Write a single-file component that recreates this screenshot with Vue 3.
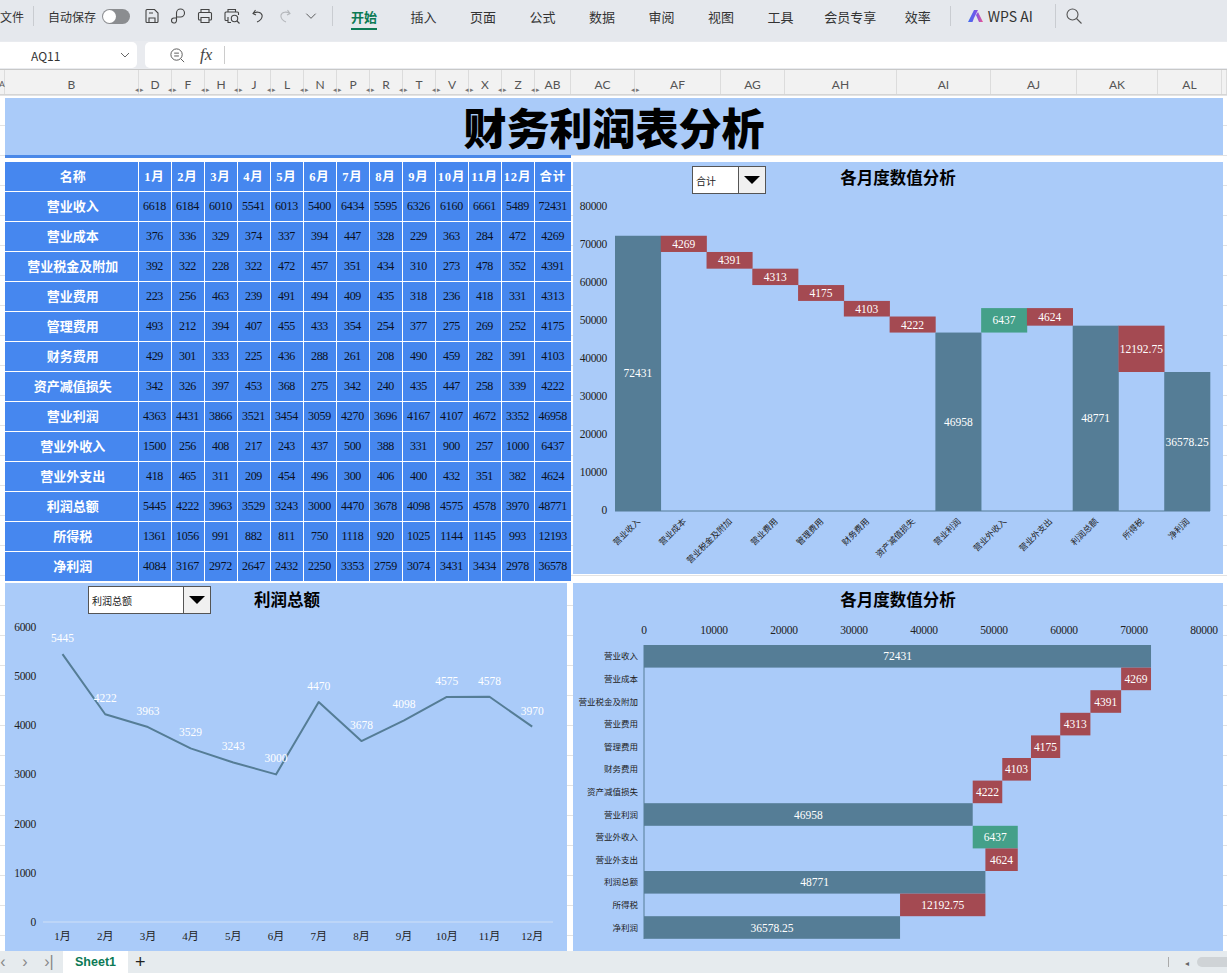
<template>
  <div class="app">
    <!-- top ribbon -->
    <header class="ribbon">
      <span class="file">文件</span>
      <i class="sep"></i>
      <span class="autosave">自动保存</span>
      <span class="toggle"><b></b></span>
      <div class="quick">
        <svg viewBox="0 0 18 18"><path d="M4 2.5h7.500L15 6v8.500a1 1 0 0 1-1 1H4a1 1 0 0 1-1-1v-11a1 1 0 0 1 1-1zM6 15.500V11h6v4.500M6 6h4" /></svg>
        <svg viewBox="0 0 18 18"><path d="M6.500 10V6a4 4 0 1 1 4 4h-4M6.500 10v3.500A2.500 2.500 0 1 1 4 11h2.500" /></svg>
        <svg viewBox="0 0 18 18"><path d="M5 5.500V2.500h8v3M5 13H3.500a1 1 0 0 1-1-1V6.500a1 1 0 0 1 1-1h11a1 1 0 0 1 1 1V12a1 1 0 0 1-1 1H13M5 10.500h8v5H5z" /></svg>
        <svg viewBox="0 0 18 18"><path d="M5 5V2.500h7.500V5M5 13.500H3a1 1 0 0 1-1-1V6a1 1 0 0 1 1-1h11.500a1 1 0 0 1 1 1v2M5 10v5.500h3M14 14l2.500 2.500" /><circle cx="11.500" cy="11.500" r="3.200" /></svg>
        <svg viewBox="0 0 18 18"><path d="M6.500 3L4 6.500l3 1.500M4 6.500c3-2 8-2 9 1.500 .8 3-2 6-5 7" /></svg>
        <svg class="faded" viewBox="0 0 18 18"><path d="M11.500 3L14 6.500l-3 1.500M14 6.500c-3-2-8-2-9 1.500-.8 3 2 6 5 7" /></svg>
        <svg class="small" viewBox="0 0 18 18"><path d="M3 6l6 6 6-6" /></svg>
      </div>
      <i class="sep"></i>
      <nav class="tabs">
        <a v-for="tab in tabs" :key="tab" :class="{ active: tab === '开始' }">{{ tab }}</a>
      </nav>
      <i class="sep sep-ai"></i>
      <svg class="ai-logo" viewBox="0 0 16 14">
        <defs>
          <linearGradient id="aigrad" x1="0" x2="1" y1="0" y2="0">
            <stop offset="0" stop-color="#3f6df0" />
            <stop offset=".55" stop-color="#7a55e8" />
            <stop offset="1" stop-color="#f2558e" />
          </linearGradient>
        </defs>
        <path d="M0 13L6 1h4L6 9 4.500 13zM8 6l2-3 5 10h-4z" fill="url(#aigrad)" />
      </svg>
      <span class="ai-text">WPS AI</span>
      <i class="sep sep-search"></i>
      <svg class="search" viewBox="0 0 18 18"><circle cx="7.500" cy="7.500" r="5.500" /><path d="M11.500 11.500l5 5" /></svg>
    </header>

    <!-- formula bar -->
    <div class="formula">
      <div class="namebox">
        <span>AQ11</span>
        <svg viewBox="0 0 12 12"><path d="M2 4l4 4 4-4" /></svg>
      </div>
      <div class="fxbox">
        <svg class="zoomico" viewBox="0 0 18 18"><circle cx="8" cy="8" r="6" /><path d="M5.500 6.500h5M5.500 9.500h5M12.500 12.500l3.500 3.500" /></svg>
        <em>fx</em>
        <i></i>
      </div>
    </div>

    <!-- column letters -->
    <div class="cols">
      <div v-for="col in columns" :key="col.name" class="col" :style="{ width: col.w + 'px' }">
        <span>{{ col.name }}</span>
        <span v-if="col.arrows" class="arrows">◂▸</span>
      </div>
    </div>

    <!-- sheet -->
    <main class="sheet">
      <div class="title-wrap">
        <h1>财务利润表分析</h1>
        <div class="strip"></div>
      </div>

      <table class="data">
        <tbody>
          <tr>
            <th>名称</th>
            <th v-for="h in headers" :key="h" class="month">{{ h }}</th>
          </tr>
          <tr v-for="row in rows" :key="row.name">
            <th>{{ row.name }}</th>
            <td v-for="(v, i) in row.values" :key="i">{{ v }}</td>
          </tr>
        </tbody>
      </table>

      <!-- waterfall -->
      <section class="panel panel-water">
        <div class="picker picker-sum"><span>合计</span><b></b></div>
        <svg class="chart" width="650" height="412" viewBox="573 162 650 412">
          <text class="ctitle" x="898" y="184">各月度数值分析</text>
          <text v-for="t in yTicks" :key="t" class="tick" x="607" :y="waterBase - 1 - t * waterScale + 4" text-anchor="end">{{ t }}</text>
          <line x1="615" x2="1210" :y1="waterBase" :y2="waterBase" class="base" />
          <g v-for="(b, i) in steps" :key="b.name">
            <rect :x="615 + i * waterStep" :y="waterBase - b.top * waterScale" :width="waterStep + 0.3" :height="b.size * waterScale" :fill="b.color" />
            <text class="val" :x="615 + (i + 0.5) * waterStep" :y="waterBase - (b.top - b.size / 2) * waterScale + 4">{{ b.size }}</text>
            <text class="cat" text-anchor="end" :transform="`translate(${618 + (i + 0.5) * waterStep} 522) rotate(-45)`">{{ b.name }}</text>
          </g>
        </svg>
      </section>

      <!-- line chart -->
      <section class="panel panel-line">
        <div class="picker picker-profit"><span>利润总额</span><b></b></div>
        <svg class="chart" width="562" height="368" viewBox="5 583 562 368">
          <text class="ctitle" x="287" y="606">利润总额</text>
          <text v-for="t in lineTicks" :key="t" class="tick" x="36" :y="lineBase - t * lineScale + 4" text-anchor="end">{{ t }}</text>
          <line x1="43" x2="553" :y1="lineBase" :y2="lineBase" class="axis-light" />
          <polyline :points="linePoints" class="trend" />
          <text v-for="p in profitPts" :key="p.label" class="val" :x="p.x" :y="p.y - 12">{{ p.v }}</text>
          <text v-for="p in profitPts" :key="p.label + 'x'" class="month-tick" :x="p.x" y="940">{{ p.label }}</text>
        </svg>
      </section>

      <!-- horizontal waterfall -->
      <section class="panel panel-bars">
        <svg class="chart" width="650" height="368" viewBox="573 583 650 368">
          <text class="ctitle" x="898" y="606">各月度数值分析</text>
          <text v-for="t in yTicks" :key="t" class="tick" :x="barLeft + t * barScale" y="634" text-anchor="middle">{{ t }}</text>
          <line :x1="barLeft" :x2="barLeft" y1="645" y2="939" class="base" />
          <g v-for="(b, i) in steps" :key="b.name">
            <rect :x="barLeft + (b.top - b.size) * barScale" :y="645 + i * barStep" :width="b.size * barScale" :height="barStep" :fill="b.color" />
            <text class="val" :x="barLeft + (b.top - b.size / 2) * barScale" :y="645 + (i + 0.5) * barStep + 4">{{ b.size }}</text>
            <text class="cat" x="638" :y="645 + (i + 0.5) * barStep + 3" text-anchor="end">{{ b.name }}</text>
          </g>
        </svg>
      </section>
    </main>

    <!-- sheet tabs -->
    <footer class="tabbar">
      <span class="nav">‹</span>
      <span class="nav">›</span>
      <span class="nav">›|</span>
      <span class="sheet-tab">Sheet1</span>
      <span class="plus">+</span>
      <div class="scroller">
        <i></i>
        <span>◂</span>
        <b></b>
      </div>
    </footer>
  </div>
</template>

<script setup>
import { computed } from 'vue';

const tabs = ['开始', '插入', '页面', '公式', '数据', '审阅', '视图', '工具', '会员专享', '效率'];

const columns = [
  { name: 'A', w: 5 }, { name: 'B', w: 134 },
  ...['D', 'F', 'H', 'J', 'L', 'N', 'P', 'R', 'T', 'V', 'X', 'Z'].map(name => ({ name, w: 33, arrows: true })),
  { name: 'AB', w: 36, arrows: true }, { name: 'AC', w: 64 }, { name: 'AF', w: 86, arrows: true },
  { name: 'AG', w: 64 }, { name: 'AH', w: 112 }, { name: 'AI', w: 94 }, { name: 'AJ', w: 86 },
  { name: 'AK', w: 81 }, { name: 'AL', w: 64 }, { name: '', w: 5 },
];

const headers = ['1月', '2月', '3月', '4月', '5月', '6月', '7月', '8月', '9月', '10月', '11月', '12月', '合计'];

const rows = [
  { name: '营业收入', values: [6618, 6184, 6010, 5541, 6013, 5400, 6434, 5595, 6326, 6160, 6661, 5489, 72431] },
  { name: '营业成本', values: [376, 336, 329, 374, 337, 394, 447, 328, 229, 363, 284, 472, 4269] },
  { name: '营业税金及附加', values: [392, 322, 228, 322, 472, 457, 351, 434, 310, 273, 478, 352, 4391] },
  { name: '营业费用', values: [223, 256, 463, 239, 491, 494, 409, 435, 318, 236, 418, 331, 4313] },
  { name: '管理费用', values: [493, 212, 394, 407, 455, 433, 354, 254, 377, 275, 269, 252, 4175] },
  { name: '财务费用', values: [429, 301, 333, 225, 436, 288, 261, 208, 490, 459, 282, 391, 4103] },
  { name: '资产减值损失', values: [342, 326, 397, 453, 368, 275, 342, 240, 435, 447, 258, 339, 4222] },
  { name: '营业利润', values: [4363, 4431, 3866, 3521, 3454, 3059, 4270, 3696, 4167, 4107, 4672, 3352, 46958] },
  { name: '营业外收入', values: [1500, 256, 408, 217, 243, 437, 500, 388, 331, 900, 257, 1000, 6437] },
  { name: '营业外支出', values: [418, 465, 311, 209, 454, 496, 300, 406, 400, 432, 351, 382, 4624] },
  { name: '利润总额', values: [5445, 4222, 3963, 3529, 3243, 3000, 4470, 3678, 4098, 4575, 4578, 3970, 48771] },
  { name: '所得税', values: [1361, 1056, 991, 882, 811, 750, 1118, 920, 1025, 1144, 1145, 993, 12193] },
  { name: '净利润', values: [4084, 3167, 2972, 2647, 2432, 2250, 3353, 2759, 3074, 3431, 3434, 2978, 36578] },
];

const BLUE = '#557d96';
const RED = '#a44a52';
const GREEN = '#44a089';

// running totals for both waterfall charts
const steps = [
  { name: '营业收入', top: 72431, size: 72431, color: BLUE },
  { name: '营业成本', top: 72431, size: 4269, color: RED },
  { name: '营业税金及附加', top: 68162, size: 4391, color: RED },
  { name: '营业费用', top: 63771, size: 4313, color: RED },
  { name: '管理费用', top: 59458, size: 4175, color: RED },
  { name: '财务费用', top: 55283, size: 4103, color: RED },
  { name: '资产减值损失', top: 51180, size: 4222, color: RED },
  { name: '营业利润', top: 46958, size: 46958, color: BLUE },
  { name: '营业外收入', top: 53395, size: 6437, color: GREEN },
  { name: '营业外支出', top: 53395, size: 4624, color: RED },
  { name: '利润总额', top: 48771, size: 48771, color: BLUE },
  { name: '所得税', top: 48771, size: 12192.75, color: RED },
  { name: '净利润', top: 36578.25, size: 36578.25, color: BLUE },
];

const yTicks = [0, 10000, 20000, 30000, 40000, 50000, 60000, 70000, 80000];
const waterBase = 511;
const waterScale = 0.0038;
const waterStep = 595 / 13;

const barLeft = 644;
const barScale = 0.007;
const barStep = 22.6;

const lineTicks = [0, 1000, 2000, 3000, 4000, 5000, 6000];
const lineBase = 922;
const lineScale = 0.0492;

const profitPts = rows[10].values.slice(0, 12).map((v, i) => ({
  v,
  label: headers[i],
  x: 62.5 + i * 42.7,
  y: lineBase - v * lineScale,
}));

const linePoints = computed(() => profitPts.map(p => `${p.x},${p.y}`).join(' '));
</script>

<style>
body {
  margin: 0;
  background: #fff;
  overflow: hidden;
}
</style>

<style scoped>
.app {
  width: 1227px;
  height: 973px;
  overflow: hidden;
  display: flex;
  flex-direction: column;
  font-family: "Noto Sans CJK SC", "Liberation Sans", sans-serif;
}

/* ribbon */
.ribbon {
  height: 41px;
  flex: none;
  display: flex;
  align-items: center;
  background: #e5e8ed;
  color: #333;
  font-size: 12px;
  padding-bottom: 9px;
  box-sizing: border-box;
}
.file {
  width: 23px;
  white-space: nowrap;
}
.sep {
  width: 1px;
  height: 20px;
  background: #c9ccd1;
  margin: 0 14px 0 10px;
}
.autosave {
  width: 48px;
  white-space: nowrap;
}
.toggle {
  width: 28px;
  height: 15px;
  margin-left: 6px;
  border-radius: 8px;
  background: #8b8d90;
  position: relative;
  display: block;
}
.toggle b {
  position: absolute;
  left: 1px;
  top: 1px;
  width: 13px;
  height: 13px;
  border-radius: 50%;
  background: #fff;
}
.quick {
  display: flex;
  align-items: center;
  gap: 8.5px;
  margin-left: 13px;
  margin-right: 2px;
}
.quick svg {
  width: 18px;
  height: 18px;
  fill: none;
  stroke: #444;
  stroke-width: 1.1;
}
.quick .faded {
  stroke: #b4b7bb;
}
.quick .small {
  width: 14px;
  height: 14px;
  margin-left: 2px;
  margin-right: 2px;
}
.tabs {
  display: flex;
  gap: 33.5px;
  font-size: 13px;
  margin-left: 4px;
}
.tabs a {
  position: relative;
  white-space: nowrap;
}
.tabs a:nth-child(9) {
  margin-left: -3px;
  margin-right: -5px;
}
.tabs a.active {
  color: #0c7a55;
  font-weight: 700;
}
.tabs a.active::after {
  content: "";
  position: absolute;
  left: 0;
  right: 0;
  bottom: -4px;
  height: 2px;
  background: #0c7a55;
}
.sep-ai {
  margin: 0 17px 0 19px;
}
.ai-logo {
  width: 16px;
  height: 14px;
}
.ai-text {
  margin-left: 4px;
  font-size: 14px;
  width: 47px;
  white-space: nowrap;
}
.sep-search {
  margin: 0 9px 0 20px;
  height: 24px;
}
.search {
  width: 18px;
  height: 18px;
  fill: none;
  stroke: #555;
  stroke-width: 1.1;
}

/* formula bar */
.formula {
  height: 29px;
  flex: none;
  display: flex;
  gap: 8px;
  background: #e9ebef;
  border-bottom: 1px solid #c8c8c8;
  box-sizing: border-box;
  padding-top: 1px;
  padding-bottom: 1px;
}
.namebox,
.fxbox {
  background: #fff;
  display: flex;
  align-items: center;
  box-sizing: border-box;
}
.namebox {
  width: 137px;
  border-radius: 0 5px 5px 0;
  font-size: 12px;
  color: #333;
  padding-left: 31px;
  justify-content: space-between;
  padding-right: 6px;
}
.namebox svg {
  width: 12px;
  height: 12px;
  fill: none;
  stroke: #666;
}
.fxbox {
  flex: 1;
  border-radius: 5px 0 0 5px;
  padding-left: 24px;
}
.zoomico {
  width: 17px;
  height: 17px;
  fill: none;
  stroke: #555;
}
.fxbox em {
  font-family: "Liberation Serif", serif;
  font-size: 17px;
  margin-left: 14px;
  color: #444;
}
.fxbox i {
  width: 1px;
  height: 18px;
  background: #ccc;
  margin-left: 12px;
}

/* column letters */
.cols {
  height: 25px;
  flex: none;
  display: flex;
  background: #f2f2f2;
  border-bottom: 1px solid #d5d5d5;
  box-sizing: border-box;
  font-family: "Lato", "Liberation Sans", sans-serif;
  font-size: 12px;
  color: #555;
}
.col {
  flex: none;
  box-sizing: border-box;
  border-right: 1px solid #dcdcdc;
  padding-top: 4px;
  display: flex;
  align-items: center;
  justify-content: center;
  position: relative;
  overflow: visible;
}
.col:first-child {
  font-size: 8px;
}
.arrows {
  position: absolute;
  left: -4px;
  bottom: 1px;
  font-size: 7px;
  line-height: 7px;
  letter-spacing: 1px;
  color: #777;
  white-space: nowrap;
}

/* sheet */
.sheet {
  flex: 1;
  min-height: 0;
  display: grid;
  grid-template-columns: 566px 650px;
  grid-template-rows: 61px 420px 368px;
  column-gap: 2px;
  row-gap: 2px;
  padding: 3px 0 0 5px;
  box-sizing: border-box;
  background-color: #fff;
  background-image: linear-gradient(#e3e3e3 1px, transparent 1px);
  background-size: 100% 30px;
}
.title-wrap {
  grid-column: 1 / 3;
  display: flex;
  flex-direction: column;
}
h1 {
  margin: 0;
  height: 57px;
  width: 1218px;
  background: #aacbf9;
  text-align: center;
  font-size: 43px;
  font-weight: 900;
  line-height: 57px;
  color: #000;
}
.strip {
  width: 566px;
  height: 3px;
  background: #4a88e8;
}

table.data {
  width: 566px;
  height: 420px;
  table-layout: fixed;
  border-collapse: collapse;
  background: #4687ef;
}
.data th,
.data td {
  border: 1px solid #fff;
  height: 30px;
  padding: 0;
  text-align: center;
  box-sizing: border-box;
  white-space: nowrap;
  overflow: hidden;
}
.data tr > :first-child {
  width: 133px;
  border-left: none;
  padding-left: 3px;
}
.data tr > :last-child {
  width: 37px;
  border-right: none;
}
.data th {
  color: #fff;
  font-size: 13px;
  font-weight: 700;
  padding-bottom: 2px;
}
.data th.month {
  font-family: "Liberation Serif", "Noto Sans CJK SC", serif;
  letter-spacing: .8px;
  font-size: 12.5px;
}
.data td {
  font-family: "Liberation Serif", serif;
  font-size: 12px;
  letter-spacing: -.3px;
  color: #0a1020;
}

.panel {
  background: #aacbf9;
  position: relative;
}
.panel-water {
  grid-column: 2;
  grid-row: 2;
  height: 412px;
  margin-top: 1px;
}
.panel-line {
  grid-column: 1;
  grid-row: 3;
  width: 562px;
  height: 368px;
}
.panel-bars {
  grid-column: 2;
  grid-row: 3;
  height: 368px;
}
.chart {
  display: block;
}
.ctitle {
  font-size: 16.5px;
  font-weight: 700;
  text-anchor: middle;
  fill: #000;
}
.tick {
  font-family: "Liberation Serif", serif;
  font-size: 11.5px;
  letter-spacing: -.3px;
  fill: #222;
}
.val {
  font-family: "Liberation Serif", serif;
  font-size: 11.5px;
  fill: #fff;
  text-anchor: middle;
}
.cat {
  font-size: 8.5px;
  fill: #222;
}
.month-tick {
  font-family: "Liberation Serif", "Noto Sans CJK SC", serif;
  font-size: 11px;
  fill: #222;
  text-anchor: middle;
}
.base {
  stroke: #557d96;
  stroke-width: 1;
}
.axis-light {
  stroke: #cfe0f7;
  stroke-width: 1;
}
.trend {
  fill: none;
  stroke: #557d96;
  stroke-width: 2;
  stroke-linejoin: round;
}

/* dropdown over chart */
.picker {
  position: absolute;
  height: 28px;
  box-sizing: border-box;
  border: 1px solid #555;
  background: #fff;
  display: flex;
  align-items: center;
  font-size: 10px;
  color: #222;
  z-index: 1;
}
.picker span {
  flex: 1;
  padding-left: 3px;
}
.picker b {
  flex: none;
  width: 27px;
  height: 100%;
  box-sizing: border-box;
  background: #f0f0f0;
  border-left: 1px solid #555;
  position: relative;
}
.picker b::after {
  content: "";
  position: absolute;
  left: 5px;
  top: 9px;
  border-left: 8px solid transparent;
  border-right: 8px solid transparent;
  border-top: 8px solid #000;
}
.picker-sum {
  left: 119px;
  top: 4px;
  width: 74px;
}
.picker-profit {
  left: 83px;
  top: 3px;
  width: 123px;
}

/* sheet tabs */
.tabbar {
  height: 22px;
  flex: none;
  display: flex;
  align-items: center;
  background: #e6ebee;
  color: #888;
  font-size: 16px;
  position: relative;
}
.nav {
  width: 24px;
  text-align: center;
  font-family: "Liberation Sans", sans-serif;
}
.nav:first-child {
  width: 20px;
  margin-left: -7px;
}
.sheet-tab {
  width: 65px;
  height: 22px;
  line-height: 22px;
  margin-left: 2px;
  background: #fff;
  color: #0c7a55;
  font-weight: 700;
  font-size: 12.5px;
  text-align: center;
  font-family: "Liberation Sans", sans-serif;
}
.plus {
  margin-left: 7px;
  color: #222;
  font-size: 18px;
  font-family: "Liberation Sans", sans-serif;
}
.scroller {
  margin-left: auto;
  display: flex;
  align-items: center;
  font-size: 8px;
  color: #666;
}
.scroller i {
  width: 1px;
  height: 10px;
  background: #aaa;
  margin-right: 16px;
}
.scroller b {
  width: 30px;
  height: 10px;
  border-radius: 5px 0 0 5px;
  background: #cfd3d6;
  margin-left: 8px;
}
</style>
